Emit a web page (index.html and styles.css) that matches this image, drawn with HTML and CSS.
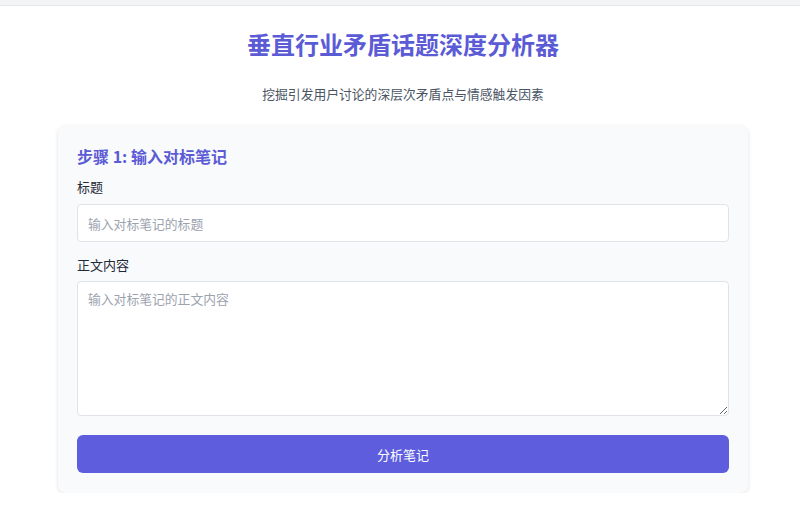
FILE: index.html
```html
<!DOCTYPE html>
<html lang="zh">
<head>
<meta charset="utf-8">
<link rel="stylesheet" href="styles.css">
</head>
<body>
<div class="topbar"></div>
<main class="page">
  <h1 class="title">垂直行业矛盾话题深度分析器</h1>
  <p class="subtitle">挖掘引发用户讨论的深层次矛盾点与情感触发因素</p>
  <section class="card">
    <h2 class="step">步骤 1: 输入对标笔记</h2>
    <label class="label" for="t">标题</label>
    <input id="t" class="input" type="text" placeholder="输入对标笔记的标题">
    <label class="label label2" for="c">正文内容</label>
    <textarea id="c" class="textarea" placeholder="输入对标笔记的正文内容"></textarea>
    <button class="btn">分析笔记</button>
  </section>
</main>
</body>
</html>
```
FILE: styles.css
```css
* { box-sizing: border-box; }
html, body { margin: 0; padding: 0; background: #fff; }
body {
  font-family: "Noto Sans CJK SC", "Noto Sans", sans-serif;
  color: #1f2937;
}
.topbar {
  height: 6px;
  background: #f3f4f6;
  border-bottom: 1px solid #e5e7eb;
}
.page {
  width: 690px;
  margin-left: 58px;
  display: flex;
  flex-direction: column;
}
.title {
  margin: 22px 0 0;
  text-align: center;
  font-size: 24px;
  line-height: 32px;
  font-weight: 700;
  color: #5b5bd6;
}
.subtitle {
  margin: 25px 0 0;
  text-align: center;
  font-size: 12.8px;
  line-height: 18px;
  color: #4b5563;
}
.card {
  margin-top: 23px;
  background: #f9fafb;
  border-radius: 8px;
  box-shadow: 0 1px 4px rgba(0,0,0,0.12);
  padding: 20px 19px 20px;
  display: flex;
  flex-direction: column;
}
.step {
  margin: 0;
  font-size: 16px;
  line-height: 20px;
  font-weight: 700;
  color: #5b5bd6;
}
.label {
  margin-top: 12px;
  font-size: 13px;
  line-height: 18px;
  color: #1f2937;
}
.label2 { margin-top: 14px; }
.input, .textarea {
  margin-top: 8px;
  width: 100%;
  background: #fff;
  border: 1px solid #e0e3e8;
  border-radius: 4px;
  padding: 0 10px;
  font-family: inherit;
  font-size: 12.8px;
  color: #1f2937;
}
.input { height: 38px; }
.textarea {
  height: 135px;
  margin-top: 7px;
  padding-top: 8px;
  line-height: 18px;
  resize: vertical;
}
.input::placeholder, .textarea::placeholder { color: #9ca3af; }
.btn {
  margin-top: 19px;
  height: 38px;
  border: 0;
  border-radius: 6px;
  background: #5d5ddd;
  color: #fff;
  font-family: inherit;
  font-size: 13px;
}
```
